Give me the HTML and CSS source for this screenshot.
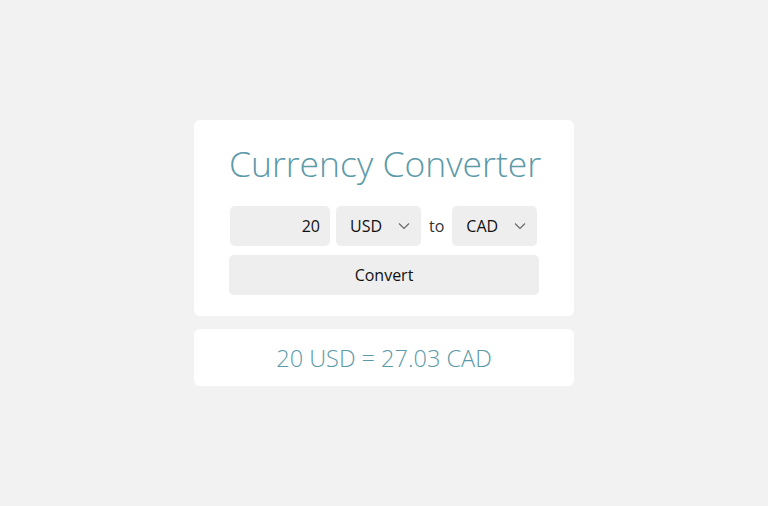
FILE: index.html
```html
<!DOCTYPE html>
<html lang="en">
<head>
  <meta charset="UTF-8" />
  <meta name="viewport" content="width=device-width, initial-scale=1.0"/>
  <title>Currency Converter</title>
  <link rel="stylesheet" href="styles.css">
</head>
<body>

  <main class="wrapper">
    <section class="card converter">
      <h1>Currency Converter</h1>

      <div class="row">
        <input type="number" id="amount" value="20" />
        <div class="select-box">
          <select id="fromCurrency">
            <option selected>USD</option>
            <option>EUR</option>
            <option>CAD</option>
          </select>
          <svg class="chevron" viewBox="0 0 12 8" width="12" height="8"><path d="M1 1.5l5 5 5-5" fill="none" stroke="#666" stroke-width="1.1"/></svg>
        </div>
        <span class="to">to</span>
        <div class="select-box">
          <select id="toCurrency">
            <option>USD</option>
            <option>EUR</option>
            <option selected>CAD</option>
          </select>
          <svg class="chevron" viewBox="0 0 12 8" width="12" height="8"><path d="M1 1.5l5 5 5-5" fill="none" stroke="#666" stroke-width="1.1"/></svg>
        </div>
      </div>

      <button id="convertBtn">Convert</button>
    </section>

    <section class="card result">
      <p id="result">20 USD = 27.03 CAD</p>
    </section>
  </main>

</body>
</html>
```

FILE: styles.css
```css
body {
  font-family: "Open Sans", "Noto Sans", sans-serif;
  margin: 0;
  padding: 0;
  background: #f2f2f2;
  color: #111;
}

.wrapper {
  width: 380px;
  margin: 120px auto 0;
  display: flex;
  flex-direction: column;
  gap: 13px;
}

.card {
  background: white;
  border-radius: 6px;
}

.converter {
  padding: 22px 35px 21px;
  display: flex;
  flex-direction: column;
}

h1 {
  margin: 0 0 22px;
  font-size: 35.5px;
  font-weight: 300;
  color: #5b9aa9;
  text-align: center;
  line-height: 42px;
  white-space: nowrap;
}

.row {
  display: flex;
  align-items: center;
  padding: 0 1px;
  gap: 6px;
}

input, select, button {
  font-family: inherit;
  font-size: 16px;
  color: #111;
  background: #eeeeee;
  border: none;
  border-radius: 5px;
  height: 40px;
}

#amount {
  width: 100px;
  box-sizing: border-box;
  padding: 0 10px;
  text-align: right;
  -moz-appearance: textfield;
}

#amount::-webkit-inner-spin-button,
#amount::-webkit-outer-spin-button {
  -webkit-appearance: none;
  margin: 0;
}

.select-box {
  position: relative;
  width: 85px;
}

.select-box select {
  width: 100%;
  padding: 0 14px;
  appearance: none;
  -webkit-appearance: none;
}

.chevron {
  position: absolute;
  right: 11px;
  top: 16px;
  pointer-events: none;
}

.to {
  margin: 0 2px;
  font-size: 16px;
  color: #333;
}

button {
  margin-top: 9px;
  width: 100%;
  cursor: pointer;
}

.result {
  height: 57px;
  display: flex;
  align-items: center;
  justify-content: center;
}

.result p {
  margin: 0;
  font-size: 23.5px;
  font-weight: 300;
  color: #5b9aa9;
}
```
